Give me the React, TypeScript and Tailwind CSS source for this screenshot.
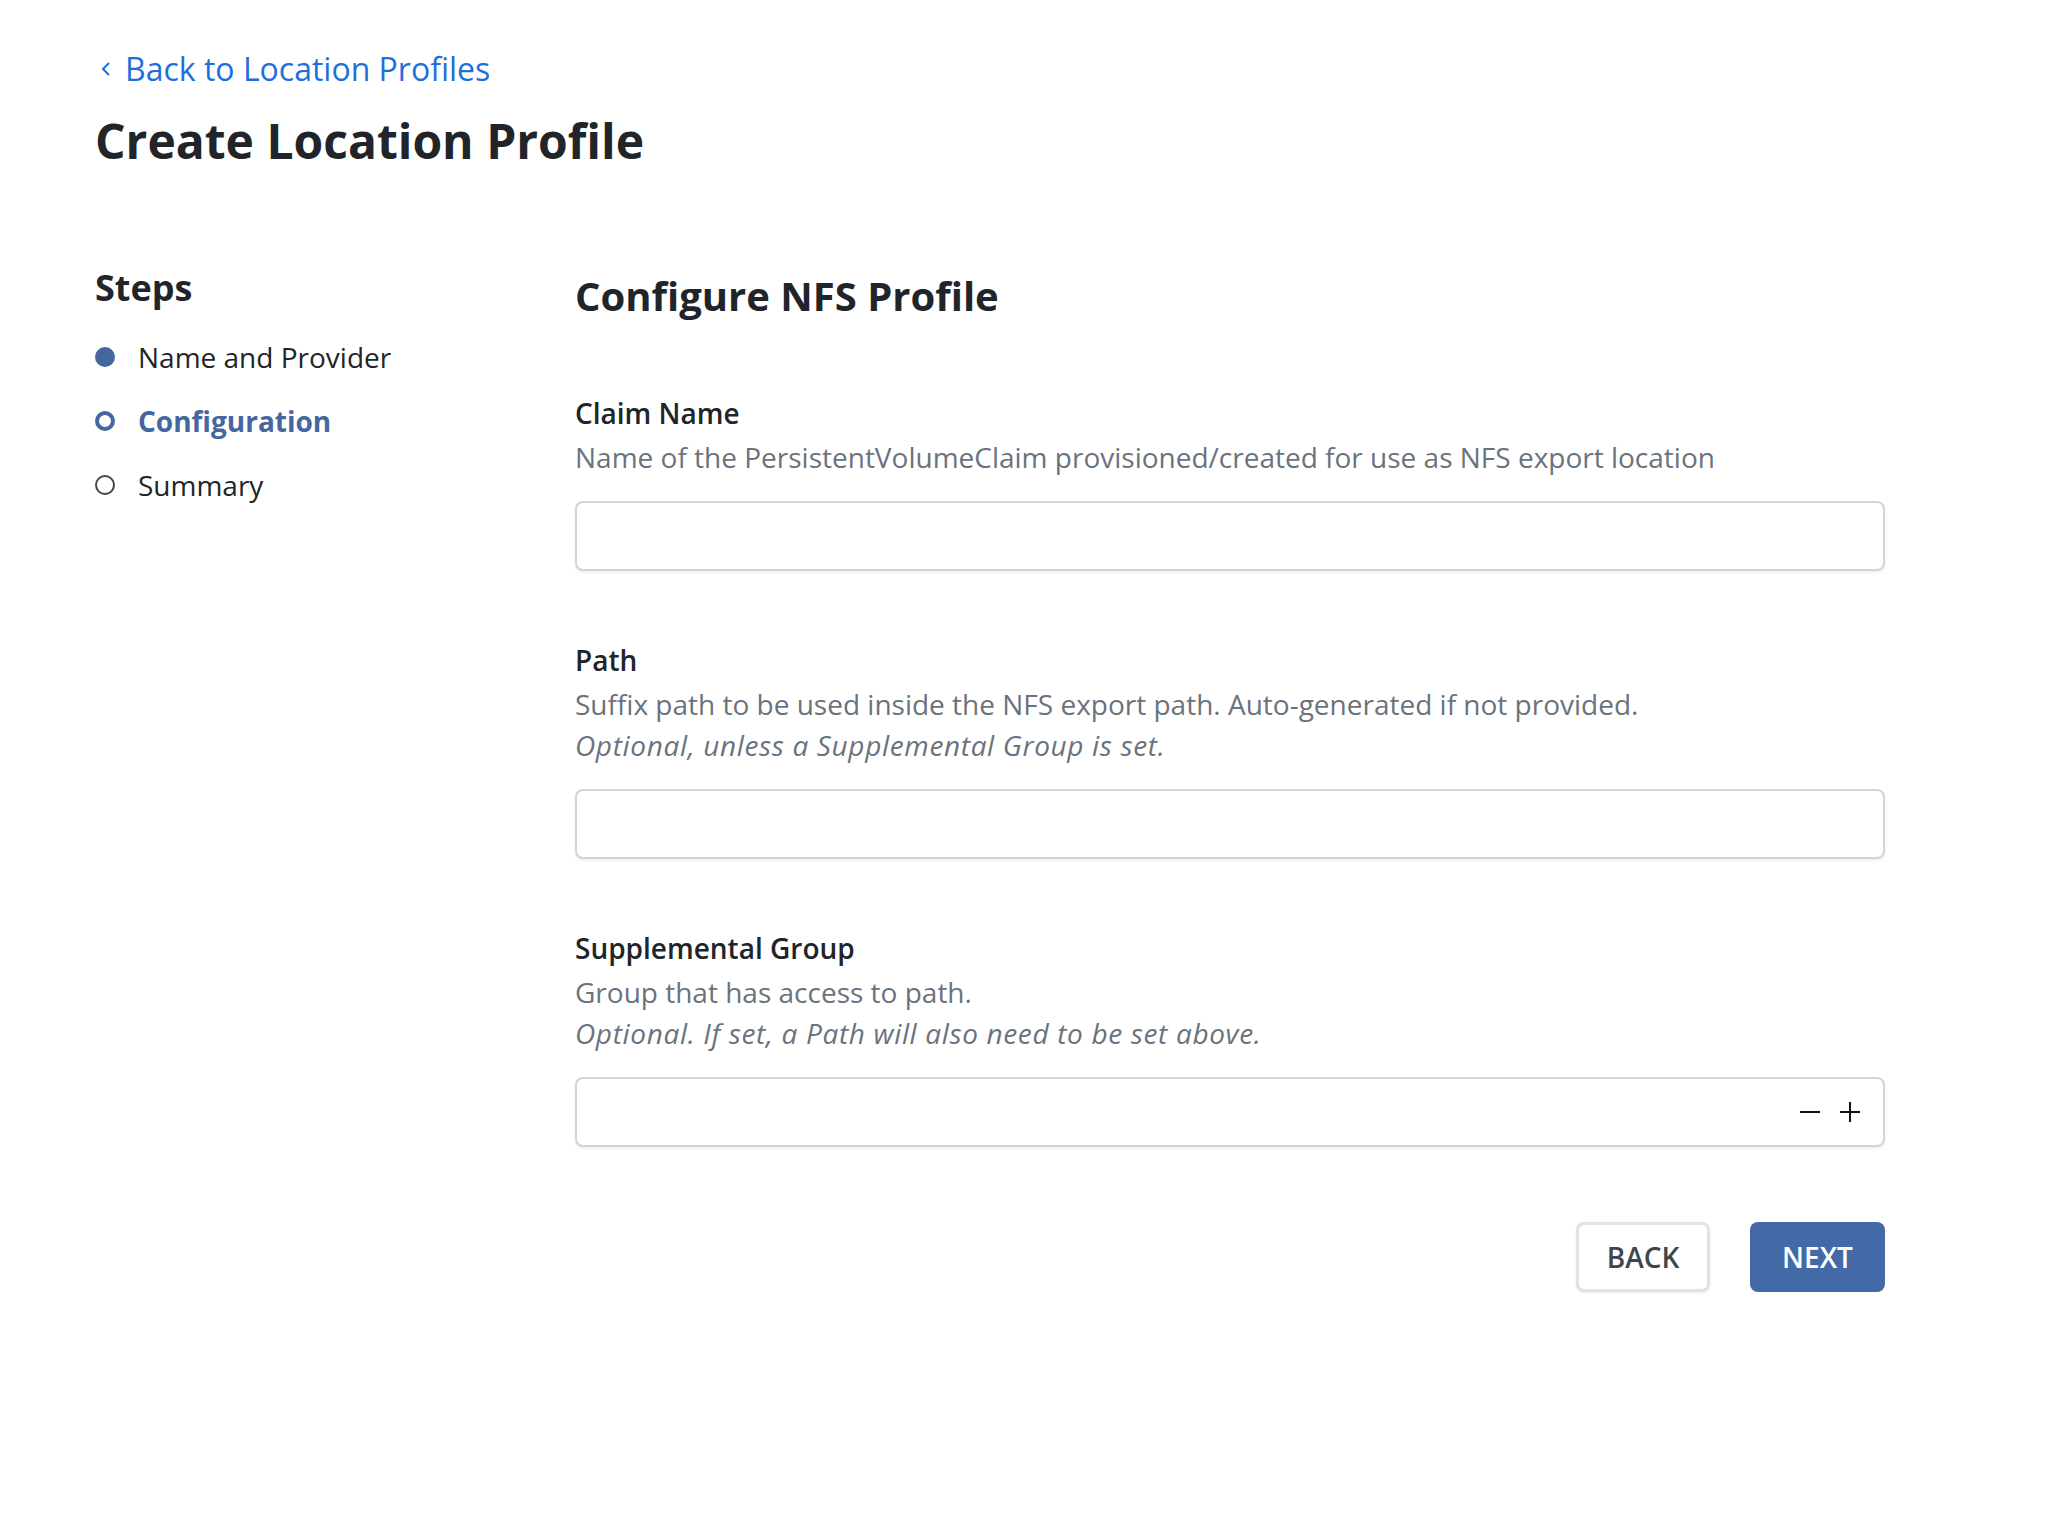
import React from "react";

function Field({
  label,
  desc,
  italic,
  stepper,
  className = "",
}: {
  label: string;
  desc: string;
  italic?: string;
  stepper?: boolean;
  className?: string;
}) {
  return (
    <div className={className}>
      <div className="text-[28px] leading-[40px] font-semibold text-[#212529]">{label}</div>
      <div className="mt-[4px] text-[28px] leading-[41px] text-[#6a737d]">
        <div>{desc}</div>
        {italic && <div className="italic tracking-[0.65px]">{italic}</div>}
      </div>
      <div className="mt-[23px] h-[70px] w-full rounded-lg border-2 border-[#d0d5db] bg-white shadow-[0_2px_3px_rgba(0,0,0,0.06)] flex items-center justify-end pr-[23px]">
        {stepper && (
          <div className="flex items-center gap-[20px]">
            <svg width="20" height="20" viewBox="0 0 20 20">
              <path d="M0 10 H20" stroke="#111" strokeWidth="2" />
            </svg>
            <svg width="20" height="20" viewBox="0 0 20 20">
              <path d="M0 10 H20 M10 0 V20" stroke="#111" strokeWidth="2" />
            </svg>
          </div>
        )}
      </div>
    </div>
  );
}

export default function App() {
  return (
    <div
      className="min-h-screen bg-white pl-[95px] pt-[48px]"
      style={{ fontFamily: '"Open Sans", "Noto Sans", sans-serif' }}
    >
      <a className="flex items-center text-[32px] leading-[42px] text-[#1f6fdb]">
        <svg width="12" height="16" viewBox="0 0 12 16" className="ml-[5px] mr-[13px]">
          <path d="M9 2 L3 8 L9 14" fill="none" stroke="#1f6fdb" strokeWidth="2" />
        </svg>
        <span>Back to Location Profiles</span>
      </a>
      <h1 className="mt-[19px] text-[48px] leading-[64px] font-bold text-[#212529]">
        Create Location Profile
      </h1>

      <div className="mt-[91px] flex">
        <div className="w-[480px] shrink-0">
          <div className="text-[36px] leading-[48px] font-bold text-[#212529]">Steps</div>
          <div className="mt-[13px] flex flex-col">
            <div className="h-[64px] flex items-center">
              <span className="w-[20px] h-[20px] rounded-full bg-[#44679f] mr-[23px]" />
              <span className="text-[28px] leading-[40px] text-[#212529]">Name and Provider</span>
            </div>
            <div className="h-[64px] flex items-center">
              <span className="w-[20px] h-[20px] rounded-full border-[4px] border-[#44679f] mr-[23px]" />
              <span className="text-[28px] leading-[40px] font-bold text-[#44679f]">Configuration</span>
            </div>
            <div className="h-[64px] flex items-center">
              <span className="w-[20px] h-[20px] rounded-full border-2 border-[#3f464d] mr-[23px]" />
              <span className="text-[28px] leading-[40px] text-[#212529]">Summary</span>
            </div>
          </div>
        </div>

        <div className="w-[1310px] pt-[6px]">
          <h2 className="text-[40px] leading-[52px] font-bold text-[#212529]">Configure NFS Profile</h2>
          <Field
            className="mt-[71px]"
            label="Claim Name"
            desc="Name of the PersistentVolumeClaim provisioned/created for use as NFS export location"
          />
          <Field
            className="mt-[69px]"
            label="Path"
            desc="Suffix path to be used inside the NFS export path. Auto-generated if not provided."
            italic="Optional, unless a Supplemental Group is set."
          />
          <Field
            className="mt-[69px]"
            label="Supplemental Group"
            desc="Group that has access to path."
            italic="Optional. If set, a Path will also need to be set above."
            stepper
          />
          <div className="mt-[75px] flex justify-end gap-[40px]">
            <button className="h-[70px] w-[134px] rounded-lg border-[3px] border-[#dfe2e6] bg-white text-[28px] font-semibold text-[#3f464d] shadow-[0_1px_3px_rgba(0,0,0,0.08)]">
              BACK
            </button>
            <button className="h-[70px] w-[135px] rounded-lg bg-[#4369a6] text-[28px] font-semibold text-white">
              NEXT
            </button>
          </div>
        </div>
      </div>
    </div>
  );
}
